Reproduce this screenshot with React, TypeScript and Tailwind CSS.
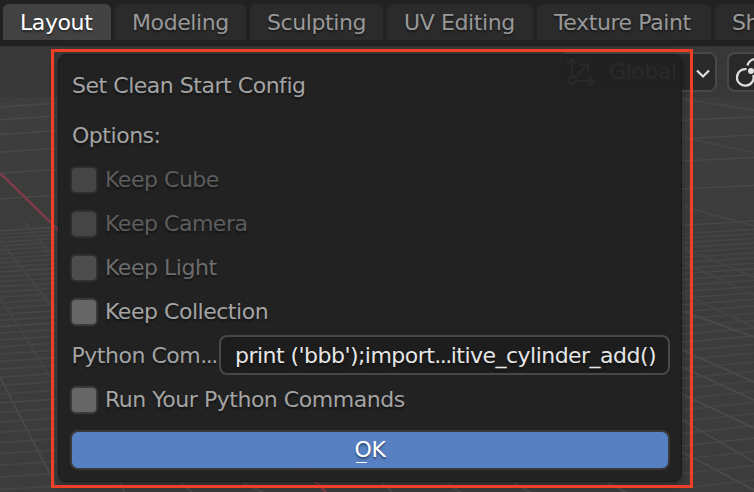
import React from "react";

type Line = [number, number, number, number];

// Rows of the floor grid converge towards the horizon, so they are evenly spaced in 1/y.
const HORIZON = -60;
const rows = (start: number, step: number, from: number, to: number) => {
  const out: { y: number; major: boolean }[] = [];
  for (let i = from; i <= to; i++) {
    out.push({ y: 1 / (start + (step * i) / 10) + HORIZON, major: i % 10 === 0 });
  }
  return out;
};
const leftRows = rows(0.00216, 0.000426, -9, 100);
const rightRows = rows(0.001976, 0.00051, -5, 70);

const diagonals: Line[] = [
  [7, 250, 57, 314],
  [0, 240, 60, 316],
  [0, 297, 57, 388],
  [0, 377, 57, 488],
  [24, 222, 57, 260],
  [682, 99, 754, 110],
  [682, 137, 754, 153],
  [682, 206, 754, 226],
  [682, 248, 754, 277],
  [682, 262, 754, 295],
  [682, 293, 754, 327],
  [682, 311, 754, 337],
  [682, 350, 754, 382],
  [682, 367, 754, 400],
  [682, 394, 754, 428],
  [682, 420, 754, 462],
  [682, 452, 754, 490],
  [120, 483, 125, 492],
  [180, 483, 192, 492],
  [243, 483, 263, 492],
  [382, 482, 392, 492],
  [447, 482, 460, 492],
  [513, 482, 530, 492],
  [607, 482, 626, 492],
];

function Floor() {
  return (
    <svg className="absolute inset-0" width="754" height="492" fill="none">
      {leftRows.map(({ y, major }, i) => (
        <path key={i} d={`M0 ${y}L57 ${y - 3.8}`} stroke={major ? "#484848" : "#454545"} strokeWidth={y < 230 && !major ? 0.4 : 1.7} />
      ))}
      {rightRows.map(({ y, major }, i) => (
        <path
          key={i}
          d={`M682 ${y}L754 ${y - 3.5 - Math.max(0, (y - 180) / 60)}`}
          stroke={major ? "#484848" : "#454545"}
          strokeWidth={y < 230 && !major ? 0.4 : 1.6}
        />
      ))}
      {diagonals.map(([a, b, c, d], i) => (
        <path key={i} d={`M${a} ${b}L${c} ${d}`} stroke={b < 300 ? "#444444" : "#494949"} strokeWidth="2" />
      ))}
      <path d="M0 173L326 492" stroke="#7a3c46" strokeWidth="2.5" />
    </svg>
  );
}

function Tab({ label, width, active }: { label: string; width: string; active?: boolean }) {
  return (
    <div
      className={`flex h-9 shrink-0 items-center rounded-t-md pl-[17px] pt-px ${width} ${
        active ? "bg-[#424242] text-white" : "bg-[#2b2b2b] text-[#989898]"
      }`}
    >
      {label}
    </div>
  );
}

function Check({ label, dim }: { label: string; dim?: "low" | "mid" }) {
  const box = dim === "low" ? "bg-[#454545] border-[#2e2e2e]" : dim === "mid" ? "bg-[#4d4d4d] border-[#303030]" : "bg-[#666666] border-[#3a3a3a]";
  const text = dim === "low" ? "text-[#5d5d5d]" : dim === "mid" ? "text-[#6d6d6d]" : "text-[#a4a4a4]";
  return (
    <div className="flex h-11 items-center">
      <div className={`mt-0.5 size-7 rounded-[6px] border-2 ${box}`} />
      <span className={`ml-[7px] pt-0.5 ${text}`}>{label}</span>
    </div>
  );
}

export default function App() {
  return (
    <div className="relative flex h-[492px] w-[754px] flex-col overflow-hidden whitespace-nowrap bg-[#3c3c3c] font-['DejaVu_Sans',sans-serif] text-[22px] leading-none tracking-[-0.4px] [text-shadow:0_2px_2px_rgba(0,0,0,0.45)]">
      <Floor />
      <nav className="relative flex h-[46px] shrink-0 gap-1 bg-[#212121] pl-[3px] pt-1">
        <Tab label="Layout" width="w-[108px]" active />
        <Tab label="Modeling" width="w-[131px]" />
        <Tab label="Sculpting" width="w-[133px]" />
        <Tab label="UV Editing" width="w-[146px]" />
        <Tab label="Texture Paint" width="w-[174px]" />
        <Tab label="Shading" width="w-[120px]" />
      </nav>
      <header className="relative flex h-[51px] shrink-0 border-t border-[#303030] bg-[#383838] pl-[559px] pt-[5px]">
        <div className="flex h-10 w-[158px] shrink-0 items-center rounded-lg border-2 border-[#484848] bg-[#292929] pl-1 text-[#dedede]">
          <svg width="32" height="32" viewBox="0 0 32 32" fill="none" stroke="currentColor" strokeWidth="2">
            <circle cx="7.500" cy="24" r="3.500" />
            <path d="M7 20.500V3.500M2.500 7.500 7 3l4.500 4.500M11 25H28M24 20.500l4.500 4.500L24 29.500M10 21 22.500 9M15 8.500h8v8" />
          </svg>
          <span className="ml-3">Global</span>
          <svg className="ml-auto mr-[5px] mt-1 shrink-0" width="14" height="10" fill="none" stroke="currentColor" strokeWidth="2.2">
            <path d="M1 1.500 7 7.500 13 1.500" />
          </svg>
        </div>
        <div className="ml-[10px] h-10 w-[60px] shrink-0 rounded-lg border-2 border-[#484848] bg-[#292929]">
          <svg width="40" height="36" fill="none" stroke="#dedede" strokeWidth="2.200">
            <path d="M17.500 15.200A8.300 8.300 0 1 0 24.200 21M18.500 11.500A9 9 0 0 1 34 8" />
            <circle cx="22" cy="17" r="3" fill="#dedede" stroke="none" />
          </svg>
        </div>
      </header>

      <section className="absolute left-[58px] top-[54px] flex h-[428px] w-[624px] flex-col rounded-lg border border-[#1a1a1a] bg-[#212121]/96 px-[11px] pt-[8px] tracking-[-0.47px] text-[#a4a4a4] shadow-[0_3px_8px_rgba(0,0,0,0.35)]">
        <div className="flex h-11 items-center pl-[2px] pt-0.5">Set Clean Start Config</div>
        <div className="mt-[6px] flex h-11 items-center pl-[2px] pt-0.5">Options:</div>
        <Check label="Keep Cube" dim="low" />
        <Check label="Keep Camera" dim="low" />
        <Check label="Keep Light" dim="mid" />
        <Check label="Keep Collection" />
        <div className="flex h-11 items-center">
          <span className="w-[149px] shrink-0 pl-[1.500px] pt-0.5">Python Com<span className="tracking-[-1.500px]">...</span></span>
          <div className="flex h-10 w-[451px] items-center rounded-lg border-2 border-[#484848] bg-[#1d1d1d] pl-[14px] pt-0.5 tracking-[-0.53px] text-[#e6e6e6]">
            print ('bbb');import<span className="tracking-[-1.500px]">...</span>itive_cylinder_add()
          </div>
        </div>
        <Check label="Run Your Python Commands" />
        <button className="mt-[9px] flex h-10 w-[600px] items-center justify-center rounded-lg border-2 border-[#393939] bg-[#5680c2] text-white [text-shadow:inherit]">
          <span className="relative after:absolute after:bottom-[-2px] after:left-[1px] after:h-[1.500px] after:w-[11px] after:bg-white">O</span>K
        </button>
      </section>

      <div className="pointer-events-none absolute left-[51px] top-[49px] h-[439px] w-[642px] border-3 border-[#ee4025]" />
    </div>
  );
}
